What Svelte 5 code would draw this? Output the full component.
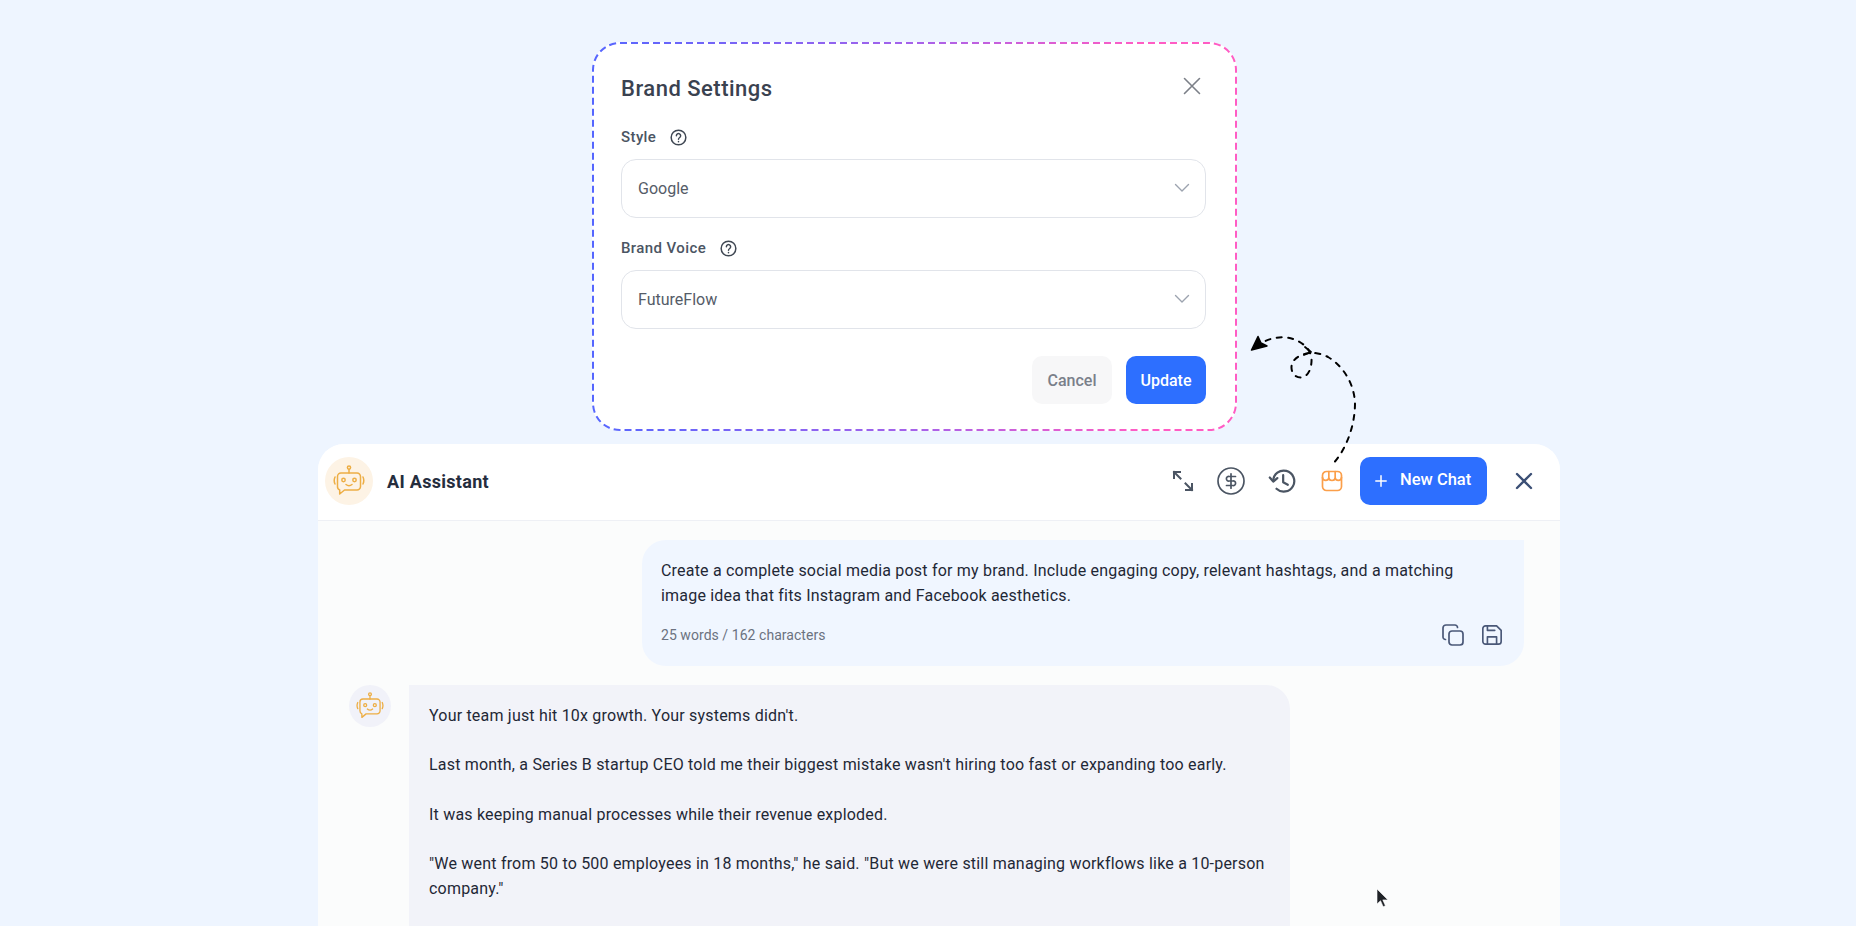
<script>
  const paragraphs = [
    "Your team just hit 10x growth. Your systems didn't.",
    "Last month, a Series B startup CEO told me their biggest mistake wasn't hiring too fast or expanding too early.",
    "It was keeping manual processes while their revenue exploded.",
    '"We went from 50 to 500 employees in 18 months," he said. "But we were still managing workflows like a 10-person company."'
  ];
</script>

{#snippet robot(size)}
  <svg width={size} height={size} viewBox="0 0 32 32" fill="none" stroke="#edae45" stroke-width="1.5" stroke-linecap="round" stroke-linejoin="round">
    <circle cx="16" cy="2.6" r="1.6" />
    <path d="M16 4.2V8" />
    <path d="M8 8h16a3.5 3.5 0 0 1 3.5 3.5v10a3.5 3.5 0 0 1-3.5 3.5H11.5l-4.8 4v-4.1a3.5 3.5 0 0 1-2.2-3.400v-10A3.5 3.5 0 0 1 8 8z" />
    <circle cx="10.5" cy="15" r="1.7" />
    <circle cx="21.5" cy="15" r="1.7" />
    <path d="M13 19.500q3 2.500 6 0" />
    <path d="M2 12q-1.600 3.500 0 7" />
    <path d="M30 12q1.600 3.500 0 7" />
  </svg>
{/snippet}

{#snippet help()}
  <svg class="help" width="17" height="17" viewBox="0 0 16 16" fill="none" stroke="#3f4753" stroke-width="1.400" stroke-linecap="round">
    <circle cx="8" cy="8" r="6.900" />
    <path d="M6 6.300a2 2 0 1 1 3.100 1.700c-.7.500-1.100.9-1.100 1.700" />
    <path d="M8 11.800v.1" />
  </svg>
{/snippet}

{#snippet chevron()}
  <svg width="16" height="16" viewBox="0 0 16 16" fill="none" stroke="#9ca3af" stroke-width="1.400" stroke-linecap="round" stroke-linejoin="round">
    <path d="M1.500 4.500 8 11l6.500-6.500" />
  </svg>
{/snippet}

<div class="page">
  <section class="modal">
    <svg class="dash" width="645" height="389" viewBox="0 0 645 389" fill="none">
      <defs>
        <linearGradient id="edge" x1="0" y1="0" x2="1" y2="0">
          <stop offset="0" stop-color="#5566ff" />
          <stop offset=".5" stop-color="#a662ea" />
          <stop offset=".85" stop-color="#ff5cc4" />
          <stop offset="1" stop-color="#ff5cc4" />
        </linearGradient>
      </defs>
      <rect x="1" y="1" width="643" height="387" rx="27" stroke="url(#edge)" stroke-width="2" stroke-dasharray="7 4" />
    </svg>
    <header class="modal-head">
      <h2>Brand Settings</h2>
      <svg width="18" height="18" viewBox="0 0 18 18" fill="none" stroke="#7c8088" stroke-width="1.600" stroke-linecap="round">
        <path d="M1.500 1.500l15 15M16.500 1.500l-15 15" />
      </svg>
    </header>
    <div class="label first"><span>Style</span>{@render help()}</div>
    <div class="select"><span>Google</span>{@render chevron()}</div>
    <div class="label"><span>Brand Voice</span>{@render help()}</div>
    <div class="select"><span>FutureFlow</span>{@render chevron()}</div>
    <div class="modal-actions">
      <button class="cancel">Cancel</button>
      <button class="update">Update</button>
    </div>
  </section>

  <section class="card">
    <header class="card-head">
      <div class="avatar">{@render robot(32)}</div>
      <h1>AI Assistant</h1>
      <div class="tools">
        <svg class="expand" width="24" height="24" viewBox="0 0 24 24" fill="none" stroke="#4b5563" stroke-width="2" stroke-linecap="square">
          <path d="M3 9V3h6M3 3l6.500 6.500M21 15v6h-6M21 21l-6.500-6.500" />
        </svg>
        <svg class="dollar" width="28" height="28" viewBox="0 0 28 28" fill="none" stroke="#4b5563" stroke-width="1.700" stroke-linecap="round" stroke-linejoin="round">
          <circle cx="14" cy="14" r="13" />
          <path d="M18.500 9.500h-6.300a2.300 2.300 0 1 0 0 4.500h3.600a2.300 2.300 0 1 1 0 4.500H9.500M14 6.800v14.400" />
        </svg>
        <svg class="history" width="28" height="28" viewBox="0 0 24 24" fill="none" stroke="#4b5563" stroke-width="1.900" stroke-linecap="round" stroke-linejoin="round">
          <path d="M4.500 12a9 9 0 1 1 2.800 6.600" />
          <path d="M1.500 9l3 3.500L8 9.500" />
          <path d="M13 7v6l4 2.200" />
        </svg>
        <svg class="store" width="24" height="24" viewBox="0 0 24 24" fill="none" stroke="#fb9f4a" stroke-width="1.700" stroke-linecap="round" stroke-linejoin="round">
          <rect x="2.500" y="2.500" width="19" height="19" rx="4" />
          <path d="M2.500 8.500a3.170 3 0 0 0 6.330 0 3.170 3 0 0 0 6.340 0 3.170 3 0 0 0 6.330 0M8.830 2.500v6M15.170 2.500v6" />
        </svg>
        <button class="new-chat">
          <svg width="12" height="12" viewBox="0 0 12 12" fill="none" stroke="#fff" stroke-width="1.500" stroke-linecap="round"><path d="M6 .8v10.400M.8 6h10.400" /></svg>
          <span>New Chat</span>
        </button>
        <svg class="close" width="18" height="18" viewBox="0 0 18 18" fill="none" stroke="#3b4f75" stroke-width="2.400" stroke-linecap="round">
          <path d="M2 2l14 14M16 2L2 16" />
        </svg>
      </div>
    </header>
    <div class="thread">
      <div class="user-msg">
        <p>Create a complete social media post for my brand. Include engaging copy, relevant hashtags, and a matching image idea that fits Instagram and Facebook aesthetics.</p>
        <div class="meta">
          <span>25 words / 162 characters</span>
          <div class="meta-icons">
            <svg width="22" height="22" viewBox="0 0 22 22" fill="none" stroke="#4a5878" stroke-width="1.700" stroke-linecap="round" stroke-linejoin="round">
              <rect x="7" y="7" width="14" height="14" rx="3" />
              <path d="M3.500 15.500A2.500 2.500 0 0 1 1 13V4a3 3 0 0 1 3-3h9a2.500 2.500 0 0 1 2.500 2.500" />
            </svg>
            <svg width="22" height="22" viewBox="0 0 24 24" fill="none" stroke="#4a5878" stroke-width="1.800" stroke-linecap="round" stroke-linejoin="round">
              <path d="M19 22H5a3 3 0 0 1-3-3V5a3 3 0 0 1 3-3h12l5 5v12a3 3 0 0 1-3 3z" />
              <path d="M17 22v-8H7v8M7 2v5h8" />
            </svg>
          </div>
        </div>
      </div>
      <div class="bot-row">
        <div class="bot-avatar">{@render robot(28)}</div>
        <div class="bot-msg">
          {#each paragraphs as p}
            <p>{p}</p>
          {/each}
        </div>
      </div>
    </div>
  </section>

  <svg class="arrow" width="120" height="140" viewBox="1240 330 120 140" fill="none">
    <path d="M1335 461.500C1347 447 1355 425 1355 403C1354 383 1343 366 1328 357C1321 353.500 1314 352.500 1309 353C1299 354.500 1291 360 1291.500 368C1292 375 1297 378 1302 377.300C1309 376 1312 367 1311.500 358C1310 349 1304 344 1297 340.500C1285 335 1271 337 1261 343.500" stroke="#000" stroke-width="2" stroke-dasharray="5 6.500" stroke-linecap="round" />
    <path d="M1251.500 350L1258 336.500L1261 343L1267 346z" fill="#000" stroke="#000" stroke-width="1.500" stroke-linejoin="round" />
    <path d="M1305 347l6 5-7 3" stroke="#000" stroke-width="1.800" stroke-linecap="round" stroke-linejoin="round" />
  </svg>
  <svg class="cursor" width="14" height="22" viewBox="0 0 14 22">
    <path d="M1 1v15l3.500-3.300 2.700 6 2.200-1-2.600-5.800H12z" fill="#1f2227" stroke="#fff" stroke-width=".6" />
  </svg>
</div>

<style>
  :global(body) {
    margin: 0;
    background: #eef5ff;
    overflow: hidden;
  }
  .page {
    position: relative;
    height: 926px;
    overflow: hidden;
    padding-top: 42px;
    box-sizing: border-box;
    background: #eef5ff;
    font-family: Roboto, "Liberation Sans", sans-serif;
  }
  .modal {
    position: relative;
    box-sizing: border-box;
    width: 645px;
    height: 389px;
    margin-left: 592px;
    padding: 0 31px 0 29px;
    background: #fff;
    border-radius: 28px;
  }
  .dash {
    position: absolute;
    inset: 0;
  }
  .modal-head {
    display: flex;
    align-items: flex-start;
    justify-content: space-between;
    box-sizing: border-box;
    height: 83px;
    padding: 34px 5px 0 0;
  }
  h2 {
    margin: 0;
    font-size: 22px;
    line-height: 26px;
    font-weight: 500;
    letter-spacing: .5px;
    color: #3a4250;
  }
  .modal-head svg {
    margin-top: 1px;
  }
  .label {
    display: flex;
    align-items: center;
    gap: 14px;
    height: 24px;
    margin-top: 18px;
    font-size: 15px;
    font-weight: 500;
    letter-spacing: .4px;
    color: #4b5563;
  }
  .label.first {
    margin-top: 0;
  }
  .select {
    display: flex;
    align-items: center;
    justify-content: space-between;
    box-sizing: border-box;
    height: 59px;
    margin-top: 10px;
    padding: 0 15px 1px 16px;
    border: 1px solid #e1e4ea;
    border-radius: 15px;
    font-size: 16px;
    color: #555c68;
  }
  .modal-actions {
    display: flex;
    justify-content: flex-end;
    gap: 14px;
    margin-top: 27px;
  }
  button {
    border: 0;
    font-family: inherit;
    padding: 0;
  }
  .modal-actions button {
    width: 80px;
    height: 48px;
    border-radius: 10px;
    font-size: 16px;
    font-weight: 500;
  }
  .cancel {
    background: #f7f7f8;
    color: #7a808a;
  }
  .update {
    background: #2d6fff;
    color: #fff;
  }
  .card {
    width: 1242px;
    height: 482px;
    margin: 13px 0 0 318px;
    overflow: hidden;
    border-radius: 26px 26px 0 0;
    background: #fbfcfc;
  }
  .card-head {
    display: flex;
    align-items: center;
    box-sizing: border-box;
    height: 77px;
    padding: 0 27px 2px 7px;
    background: #fff;
    border-bottom: 1px solid #eef0f5;
  }
  .avatar {
    display: flex;
    align-items: center;
    justify-content: center;
    width: 48px;
    height: 48px;
    border-radius: 50%;
    background: #fdf3e5;
  }
  h1 {
    margin: 0 0 0 14px;
    font-size: 18px;
    font-weight: 700;
    letter-spacing: .3px;
    color: #252d3d;
  }
  .tools {
    display: flex;
    align-items: center;
    gap: 24px;
    margin-left: auto;
  }
  .expand {
    margin-right: -2px;
  }
  .dollar {
    margin-right: -1px;
  }
  .new-chat {
    display: flex;
    align-items: center;
    gap: 13px;
    box-sizing: border-box;
    width: 127px;
    height: 48px;
    padding-left: 15px;
    margin-left: -8px;
    border-radius: 10px;
    background: #2d6fff;
    color: #fff;
    font-size: 16.500px;
    font-weight: 500;
  }
  .new-chat span {
    margin-top: -3px;
  }
  .close {
    margin-left: 4px;
  }
  .thread {
    padding: 19px 36px 0 31px;
  }
  .user-msg {
    box-sizing: border-box;
    width: 882px;
    height: 126px;
    margin-left: auto;
    padding: 19px 19px 0;
    border-radius: 24px 0 24px 24px;
    background: #f0f6ff;
  }
  .user-msg p {
    max-width: 810px;
  }
  p {
    margin: 0;
    font-size: 16px;
    letter-spacing: .2px;
    line-height: 24.750px;
    color: #1f2836;
  }
  .meta {
    display: flex;
    align-items: center;
    justify-content: space-between;
    margin-top: 15px;
    font-size: 14px;
    letter-spacing: .05px;
    color: #6b7280;
  }
  .meta-icons {
    display: flex;
    gap: 17px;
    margin-right: 2px;
  }
  .bot-row {
    display: flex;
    gap: 18px;
    margin-top: 19px;
  }
  .bot-avatar {
    display: flex;
    align-items: center;
    justify-content: center;
    flex: none;
    width: 42px;
    height: 42px;
    border-radius: 50%;
    background: #f1f2f9;
  }
  .bot-msg {
    display: flex;
    flex-direction: column;
    gap: 24.750px;
    box-sizing: border-box;
    width: 881px;
    min-height: 400px;
    padding: 18.500px 20px;
    border-radius: 0 24px 0 0;
    background: #f2f3f9;
  }
  .arrow {
    position: absolute;
    left: 1240px;
    top: 330px;
  }
  .cursor {
    position: absolute;
    left: 1376px;
    top: 888px;
  }
</style>
